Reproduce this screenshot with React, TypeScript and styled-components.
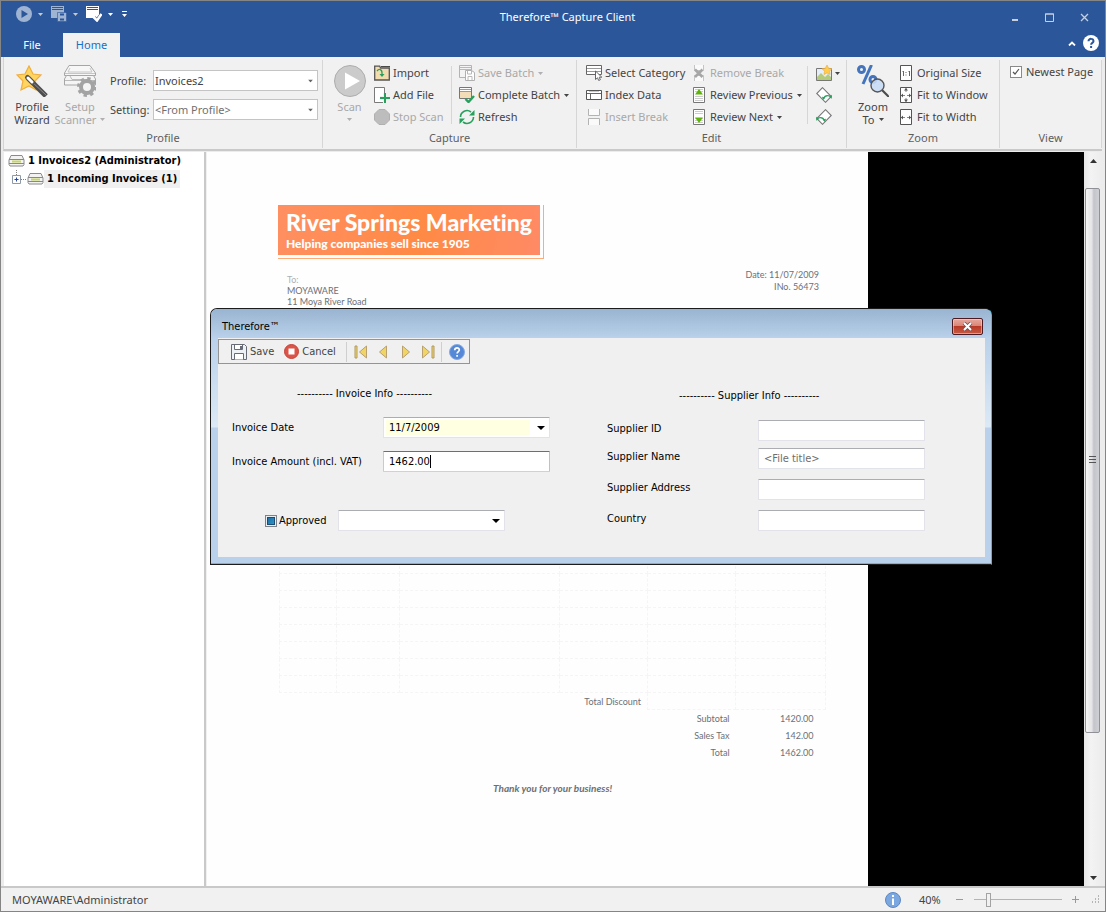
import React from "react";
import styled, { createGlobalStyle, css } from "styled-components";

const UI = `"Noto Sans", "Open Sans", sans-serif`;
const DIALOG = `"DejaVu Sans Condensed", "Liberation Sans", sans-serif`;
const PAPER = `Lato, "Open Sans", sans-serif`;

const Global = createGlobalStyle`
  *, *::before, *::after { box-sizing: border-box; }
  body { margin: 0; background: #fff; font: 11px/14px ${UI}; color: #444; }
  button, input, select { font: inherit; color: inherit; margin: 0; }
  button { border: 0; padding: 0; background: none; cursor: default; }
  svg { display: block; flex: none; }
`;

const Frame = styled.div`
  min-height: 100vh;
  padding: 0 1px 1px 0;
  display: grid;
`;

const AppWindow = styled.div`
  display: grid;
  grid-template-rows: auto auto 1fr auto;
  border: 1px solid #858585;
  background: #ececec;
  min-width: 0;
`;

/* ---------- title bar ---------- */

const TitleArea = styled.header`
  background: #2b579a;
  color: #fff;
`;

const TitleRow = styled.div`
  display: flex;
  align-items: center;
  height: 32px;
`;

const QuickAccess = styled.div`
  display: flex;
  align-items: flex-start;
  padding: 0 0 6px 15px;
  gap: 8px;
  width: 137px;
`;

const QuickButton = styled.button`
  display: flex;
  align-items: center;
  gap: 6px;
`;

const Title = styled.h1`
  flex: 1;
  margin: 0;
  font-size: 11px;
  line-height: 16px;
  font-weight: 400;
  text-align: center;
`;

const WindowButtons = styled.div`
  display: flex;
  align-items: center;
  padding-right: 3px;
`;

const WindowButton = styled.button`
  width: 35px;
  height: 32px;
  display: grid;
  place-items: center;
`;

const TabRow = styled.nav`
  display: flex;
  height: 24px;
  align-items: stretch;
`;

const Tab = styled.button<{ $active?: boolean }>`
  width: ${(p) => (p.$active ? 57 : 62)}px;
  background: ${(p) => (p.$active ? "#f1f1f1" : "transparent")};
  color: ${(p) => (p.$active ? "#1a6fc9" : "#fff")};
`;

const TabTools = styled.div`
  margin-left: auto;
  display: flex;
  align-items: center;
  gap: 7px;
  padding: 0 6px 4px 0;
`;

/* ---------- ribbon ---------- */

const Ribbon = styled.section`
  display: grid;
  grid-template-columns: 319px 254px 270px 153px 1fr;
  margin: 0 3px 1px 2px;
  border-left: 1px solid #d4d4d4;
  border-bottom: 2px solid #c9c9c9;
  background: #f1f1f1;
`;

const Group = styled.section`
  margin: 3px 0 1px;
  padding-top: 2px;
  border-right: 1px solid #d6d6d6;
  display: grid;
  grid-template-rows: 66px 20px;
`;

const GroupBody = styled.div<{ $cols: string; $pad?: string }>`
  display: grid;
  grid-template-columns: ${(p) => p.$cols};
  padding: ${(p) => p.$pad ?? "0"};
`;

const GroupLabel = styled.h2`
  margin: 0;
  font-size: 11px;
  line-height: 20px;
  font-weight: 400;
  text-align: center;
  color: #5e5e5e;
`;

const BigButton = styled.button<{ $off?: boolean }>`
  display: flex;
  flex-direction: column;
  align-items: center;
  padding-top: 3px;
  gap: 3px;
  line-height: 13px;
  white-space: nowrap;
  color: ${(p) => (p.$off ? "#a8a8a8" : "#444")};
`;

const BigText = styled.span`
  display: flex;
  flex-direction: column;
  align-items: center;
`;

const WithArrow = styled.span`
  display: flex;
  align-items: center;
  gap: 4px;
  min-height: 13px;
`;

const Column = styled.div<{ $indent?: number }>`
  display: grid;
  grid-template-rows: repeat(3, 22px);
  justify-items: start;
  padding-left: ${(p) => p.$indent ?? 0}px;
`;

const SmallButton = styled.button<{ $off?: boolean }>`
  display: flex;
  align-items: center;
  gap: 3px;
  white-space: nowrap;
  color: ${(p) => (p.$off ? "#a8a8a8" : "#444")};
`;

const ArrowGap = styled.span`
  display: flex;
  padding-left: 1px;
`;

const Divider = styled.span`
  width: 1px;
  height: 58px;
  margin-top: 4px;
  background: #d6d6d6;
`;

const ProfileForm = styled.div`
  display: grid;
  grid-template-columns: 43px 1fr;
  grid-auto-rows: 21px;
  row-gap: 8px;
  align-items: center;
  padding: 8px 0 0 5px;
`;

const SelectBox = styled.span`
  position: relative;
  display: grid;
  height: 21px;
`;

const RibbonSelect = styled.select<{ $muted?: boolean }>`
  appearance: none;
  width: 100%;
  border: 1px solid #c4c4c4;
  border-radius: 0;
  background: #fff;
  padding: 0 16px 0 1px;
  color: ${(p) => (p.$muted ? "#707070" : "#444")};
`;

const SelectArrow = styled.span<{ $right: number }>`
  position: absolute;
  right: ${(p) => p.$right}px;
  top: 50%;
  transform: translateY(-50%);
  pointer-events: none;
`;

const Check = styled.label`
  display: flex;
  align-items: center;
  gap: 4px;
  height: 20px;
  white-space: nowrap;
`;

const Tick = styled.input`
  appearance: none;
  width: 12px;
  height: 12px;
  border: 1px solid #8a8a8a;
  background: #fff
    url("data:image/svg+xml,%3Csvg xmlns='http://www.w3.org/2000/svg' viewBox='0 0 10 10'%3E%3Cpath d='M2 5l2 2 4-5' fill='none' stroke='%23555' stroke-width='1.2'/%3E%3C/svg%3E")
    center / 10px 10px no-repeat;
`;

/* ---------- work area ---------- */

const Work = styled.main`
  position: relative;
  display: grid;
  grid-template-columns: 200px 3px 1fr 17px;
  margin: 0 4px 0 3px;
  min-height: 0;
`;

const Tree = styled.ul`
  list-style: none;
  margin: 0;
  padding: 0 0 0 4px;
  background: #fff;
  font: bold 11px/18px ${DIALOG};
  color: #000;
`;

const Node = styled.li`
  display: flex;
  align-items: center;
  height: 18px;
  white-space: nowrap;
`;

const ExpanderSlot = styled.span`
  padding-left: 4px;
`;

const NodeText = styled.span<{ $selected?: boolean }>`
  padding: 0 3px;
  background: ${(p) => (p.$selected ? "#f0f0f0" : "transparent")};
`;

const Splitter = styled.div`
  background: #c9c9c9;
  border-right: 1px solid #f0f0f0;
`;

const Viewer = styled.div`
  background: #000;
  overflow: hidden;
`;

const Sheet = styled.article`
  width: 661px;
  min-height: 100%;
  background: #fefefe;
  color: #6c7076;
  font: 9px/11px ${PAPER};
  font-variant-ligatures: none;
  padding: 53px 42px 60px 71px;
`;

const Banner = styled.div`
  width: 266px;
  padding: 0 3px 3px 0;
  border: solid #ffab78;
  border-width: 0 1px 1px 0;
`;

const BannerFill = styled.div`
  height: 50px;
  padding: 3px 0 0 8px;
  background: linear-gradient(100deg, #ff8f62, #ff8a45 55%, #ff8a66);
  color: #fff;
`;

const Brand = styled.h3`
  margin: 0;
  font-size: 23px;
  line-height: 28px;
  font-weight: 900;
  white-space: nowrap;
`;

const Slogan = styled.p`
  margin: 0;
  font-size: 12px;
  line-height: 15px;
  font-weight: 900;
`;

const Addresses = styled.div`
  display: flex;
  justify-content: space-between;
  padding: 10px 7px 0 9px;
`;

const Address = styled.address<{ $right?: boolean }>`
  font-style: normal;
  text-align: ${(p) => (p.$right ? "right" : "left")};
  padding-top: ${(p) => (p.$right ? 0 : 5)}px;
  line-height: ${(p) => (p.$right ? 12 : 11)}px;
`;

const Faded = styled.span`
  color: #adb0b4;
`;

const Items = styled.table`
  width: 546px;
  margin: 249px 0 0 1px;
  border-collapse: collapse;
  table-layout: fixed;
`;

const Cell = styled.td`
  height: 17px;
  padding: 0;
  border: 1px dashed #f5f5f5;
`;

const Sum = styled.td<{ $pad: number }>`
  height: 17px;
  padding: 0 ${(p) => p.$pad}px 0 0;
  text-align: right;
`;

const Thanks = styled.p`
  margin: 21px 0 0 215px;
  font-size: 10px;
  line-height: 12px;
  font-weight: 700;
  font-style: italic;
`;

const ScrollBar = styled.div`
  display: flex;
  flex-direction: column;
  padding-left: 1px;
  background: linear-gradient(90deg, #e6e6e6, #f3f3f3 40%, #ededed);
`;

const ScrollButton = styled.button<{ $tall?: boolean }>`
  height: ${(p) => (p.$tall ? 36 : 17)}px;
  display: flex;
  justify-content: center;
  align-items: flex-start;
  padding-top: 7px;
`;

const ScrollTrack = styled.div`
  flex: 1;
`;

const ScrollThumb = styled.div`
  width: 15px;
  height: 80%;
  border: 1px solid #8f9196;
  border-radius: 2px;
  background: linear-gradient(90deg, #f6f6f6, #e4e4e6 45%, #c4c5cb 60%, #cfd0d5);
  display: grid;
  place-items: center;
`;

/* ---------- dialog ---------- */

const Dialog = styled.section`
  position: absolute;
  left: 206px;
  top: 156px;
  width: 782px;
  border: 1px solid #1c1c1c;
  border-right-color: #2fc4e0;
  border-radius: 7px 7px 0 0;
  background: linear-gradient(#b9d1ea 28px, #dce9f6 118px, #b9d1ea 119px);
  box-shadow: inset 0 -1px 0 #2fd3ee;
  padding: 0 6px 7px 7px;
  font: 11px/16px ${DIALOG};
  color: #000;
`;

const DialogTitle = styled.header`
  display: flex;
  align-items: center;
  justify-content: space-between;
  height: 29px;
  margin: 0 -6px 0 -7px;
  padding: 6px 8px 0 11px;
  border-radius: 6px 6px 0 0;
  background: linear-gradient(#99b4d1, #b9d1ea);
`;

const DialogName = styled.h2`
  margin: 0;
  font-size: 11px;
  line-height: 16px;
  font-weight: 400;
`;

const CloseButton = styled.button`
  width: 31px;
  height: 17px;
  border: 1px solid #4e1a22;
  border-radius: 2px;
  background: linear-gradient(#e8a89c, #d98476 48%, #b83a26 50%, #c75a45);
  box-shadow: inset 0 0 0 1px rgba(255, 220, 210, 0.5);
  display: grid;
  place-items: center;
`;

const DialogBody = styled.div`
  background: #f0f0f0;
  height: 219px;
`;

const Tools = styled.div`
  display: inline-flex;
  align-items: center;
  height: 25px;
  margin-top: 1px;
  padding: 0 4px 0 12px;
  border: 1px solid #949494;
  vertical-align: top;
`;

const ToolButton = styled.button<{ $gap?: number }>`
  display: flex;
  align-items: center;
  gap: 3px;
  margin-right: ${(p) => p.$gap ?? 6}px;
  color: #444;
`;

const ToolDivider = styled.span`
  width: 1px;
  height: 20px;
  margin-right: 7px;
  background: #cfcfcf;
`;

const Fields = styled.form`
  display: grid;
  grid-template-columns: 375px 1fr;
  padding: 22px 60px 0 14px;
`;

const Pane = styled.fieldset`
  border: 0;
  margin: 0;
  padding: 0;
  min-width: 0;
`;

const PaneTitle = styled.div<{ $indent: number; $top: number; $bottom: number }>`
  padding: ${(p) => p.$top}px 0 ${(p) => p.$bottom}px ${(p) => p.$indent}px;
  white-space: pre;
`;

const FieldRow = styled.div<{ $gap: number; $top?: boolean }>`
  display: grid;
  grid-template-columns: 151px 167px;
  align-items: ${(p) => (p.$top ? "start" : "center")};
  margin-bottom: ${(p) => p.$gap}px;
  > label {
    padding-top: ${(p) => (p.$top ? 1 : 0)}px;
  }
`;

const fieldLook = css`
  width: 100%;
  height: 21px;
  border: 1px solid #e2e3ea;
  border-top-color: #abadb3;
  border-radius: 1px;
  background: #fff;
  padding: 0 5px;
  outline: none;
`;

const TextBox = styled.input<{ $focused?: boolean }>`
  ${fieldLook}
  ${(p) =>
    p.$focused &&
    css`
      border-color: #3d7bad #a4c9e3 #b7d9ed #b5cfe7;
    `}
  &::placeholder {
    color: #6d6d6d;
    opacity: 1;
  }
`;

const DropDown = styled.select<{ $required?: boolean }>`
  appearance: none;
  ${fieldLook}
  box-shadow: inset 0 0 0 2px #fff, inset -19px 0 0 0 #fff;
  background: ${(p) => (p.$required ? "#ffffe1" : "#fff")};
`;

const CaretBox = styled.span`
  position: relative;
  display: grid;
  &::after {
    content: "";
    position: absolute;
    left: 47px;
    top: 4px;
    width: 1px;
    height: 13px;
    background: #000;
  }
`;

const ApprovalRow = styled.div`
  display: grid;
  grid-template-columns: 73px 167px;
  align-items: center;
  margin: 38px 0 0 33px;
`;

const Approval = styled.label`
  display: flex;
  align-items: center;
  gap: 2px;
`;

const MixedBox = styled.input`
  appearance: none;
  width: 12px;
  height: 12px;
  border: 1px solid #7f8388;
  background: linear-gradient(135deg, #1c5f93, #2fa3d6);
  box-shadow: inset 0 0 0 1px #e8eef2, inset 0 0 0 2px #1b4c77;
`;

/* ---------- status bar ---------- */

const Status = styled.footer`
  display: flex;
  align-items: center;
  height: 25px;
  padding: 0 5px 0 11px;
  border-top: 2px solid #c9c9c9;
  background: #f1f1f1;
`;

const StatusTools = styled.div`
  margin-left: auto;
  display: flex;
  align-items: center;
`;

const ZoomValue = styled.output`
  width: 36px;
  margin-left: 18px;
`;

const Slider = styled.input`
  appearance: none;
  width: 88px;
  height: 14px;
  background: linear-gradient(#b4b4b4, #b4b4b4) center / 100% 1px no-repeat;
  &::-webkit-slider-thumb {
    appearance: none;
    width: 5px;
    height: 14px;
    border: 1px solid #a3a3a3;
    background: #f1f1f1;
  }
`;

const SliderBox = styled.span`
  display: flex;
  padding: 0 9px 0 10px;
`;

const Grip = styled.span`
  align-self: flex-end;
  padding: 0 0 4px 11px;
`;

/* ---------- drawings ---------- */

const Arrow = ({ fill = "#444", w = 5 }: { fill?: string; w?: number }) => (
  <svg width={w} height={w === 5 ? 3 : 4} viewBox={w === 5 ? "0 0 5 3" : "0 0 8 4"}>
    <path d={w === 5 ? "M0 0h5L2.5 3z" : "M0 0h8L4 4z"} fill={fill} />
  </svg>
);

const Svg = ({ s = 16, children }: { s?: number; children: React.ReactNode }) => (
  <svg width={s} height={s} viewBox={`0 0 ${s} ${s}`} fill="none">
    {children}
  </svg>
);

const QuickScan = () => (
  <Svg>
    <circle cx="8" cy="8" r="8" fill="#9fb3d3" />
    <path d="M5.500 4v8l6.500-4z" fill="#2b579a" />
  </Svg>
);

const QuickSave = () => (
  <Svg>
    <path d="M0 0h13v7H7v5H0z" fill="#9fb3d3" />
    <path d="M1 1.500h11M1 3.500h11" stroke="#2b579a" />
    <path d="M6.500 6.500h8l1 1v8h-9z" fill="#9fb3d3" stroke="#2b579a" strokeWidth=".600" />
    <path d="M9 8.500h4M9 13.500h4" stroke="#2b579a" strokeWidth="2" />
  </Svg>
);

const QuickComplete = () => (
  <svg width="16" height="16" viewBox="0 0 16 16" fill="none">
    <path d="M0 0h13v12H0z" fill="#fff" />
    <path d="M1 1.500h11M1 3.500h11" stroke="#2b579a" />
    <path d="M7 11l4 3.500L16 8" stroke="#2b579a" strokeWidth="4" />
    <path d="M0 5h9v7H0z" fill="#fff" />
    <path d="M7.500 11l3.500 3.500L15.500 8" stroke="#fff" strokeWidth="2.500" />
  </svg>
);

const Wizard = () => (
  <Svg s={32}>
    <path d="M13 1l4 8 8 1-6 6 1 9-7-4-8 4 2-9-6-6 8-1z" fill="#ffd45f" stroke="#efae3f" strokeWidth="1.200" />
    <path d="M12 13l18 18" stroke="#4d4d4d" strokeWidth="5" />
    <path d="M14 15l16 15" stroke="#8f8f8f" strokeWidth="1" />
    <path d="M11.500 12.500l5 5" stroke="#555" strokeWidth="5" strokeLinecap="round" />
    <path d="M12 13l4 4" stroke="#fff" strokeWidth="3" strokeLinecap="round" />
  </Svg>
);

const ScannerSetup = () => (
  <Svg s={32}>
    <path d="M5 .500h21L31.500 8v2.500H.500V8z" fill="#f7f7f7" stroke="#a6a6a6" />
    <path d="M1 8.500h30M6 3L4 7h24l-2-4" stroke="#c6c6c6" />
    <path d="M5 10h22v4H5z" fill="#d5d5d5" />
    <path d="M.500 14l2-3.500h27l2 3.500v6H.500z" fill="#f5f5f5" stroke="#a6a6a6" />
    <path d="M1 15.500h30M6 11l2 3.500h16" stroke="#bbb" />
    <circle cx="23" cy="22" r="6" fill="#f4f4f4" stroke="#a3a3a3" strokeWidth="4" />
    <circle cx="23" cy="22" r="8.500" stroke="#a3a3a3" strokeWidth="3" strokeDasharray="3.300 3.376" />
  </Svg>
);

const ScanBig = () => (
  <Svg s={32}>
    <circle cx="16" cy="16" r="15.500" fill="#cbcbcb" stroke="#adadad" />
    <path d="M11 7.500v17L26 16z" fill="#fff" />
  </Svg>
);

const ImportIcon = () => (
  <Svg>
    <path d="M.700 15V1.200h5l1 2h8.600V15z" fill="#f2dcae" stroke="#555" strokeWidth="1.300" />
    <path d="M7 1h9v1.500H7z" fill="#4a4a4a" />
    <path d="M3 6c2-2.500 5-2 5 2v2" stroke="#27a05d" strokeWidth="1.300" />
    <path d="M5.500 9h5L8 12z" fill="#27a05d" />
  </Svg>
);

const AddFileIcon = () => (
  <Svg>
    <path d="M.500.500h10v15h-10z" fill="#fff" stroke="#7a7a7a" />
    <path d="M11 6v10M6 11h10" stroke="#f1f1f1" strokeWidth="4" />
    <path d="M11 6v10M6 11h10" stroke="#27a05d" strokeWidth="2" />
  </Svg>
);

const StopIcon = () => (
  <Svg>
    <path d="M5 .500h6L15.500 5v6L11 15.500H5L.500 11V5z" fill="#bdbdbd" stroke="#b0b0b0" />
  </Svg>
);

const SaveBatchIcon = () => (
  <Svg>
    <path d="M.500.500h12v12H.500z" fill="#f4f4f4" stroke="#b3b3b3" />
    <path d="M1 2.500h11M1 4.500h11" stroke="#b9b9b9" />
    <path d="M6.500 5.500h6l3 2v8h-9z" fill="#fff" stroke="#b0b0b0" />
    <path d="M8.500 6v3h4V6M9 15v-3.500h4V15" stroke="#b8b8b8" />
  </Svg>
);

const CompleteIcon = () => (
  <Svg>
    <path d="M.500.500h12v11H.500z" fill="#f3dcb8" stroke="#777" />
    <path d="M1 1h11v3.500H1z" fill="#fff" />
    <path d="M1 2.500h11M1 4.500h11" stroke="#999" />
    <path d="M6.500 12l3 3L15 9" stroke="#27a05d" strokeWidth="2.400" />
  </Svg>
);

const RefreshIcon = () => (
  <Svg>
    <path d="M1.500 8A6.500 6.500 0 0 1 12 3M14.500 8A6.500 6.500 0 0 1 4 13" stroke="#27a05d" strokeWidth="1.600" />
    <path d="M15.500 1v5.500H10zM.500 15V9.500H6z" fill="#27a05d" />
  </Svg>
);

const CategoryIcon = () => (
  <Svg>
    <path d="M.500.500h15v9H.500z" fill="#fff" stroke="#666" />
    <path d="M1 3.500h14M1 6.500h14" stroke="#999" />
    <path d="M9.500 6v8.500l2-1.700 1.200 2.700 1.700-.800-1.200-2.500h2.600z" fill="#fff" stroke="#666" />
  </Svg>
);

const IndexIcon = () => (
  <Svg>
    <path d="M.500 3.500h15v9H.500z" fill="#fff" stroke="#555" />
    <path d="M1 6.500h14M4.500 7v5" stroke="#666" />
    <path d="M3 4.500h10" stroke="#c9c9c9" />
  </Svg>
);

const InsertBreakIcon = () => (
  <Svg>
    <path d="M2.500 0v6.500h11V0M2.500 16V9.500h11V16" fill="#fafafa" stroke="#b3b3b3" />
  </Svg>
);

const RemoveBreakIcon = () => (
  <Svg>
    <path d="M3.500 0v5.500h9V0M3.500 16v-5.500h9V16" fill="#fafafa" stroke="#c4c4c4" />
    <path d="M4 4.500l7.500 7.500M11.500 4.500L4 12" stroke="#a6a6a6" strokeWidth="2.600" />
  </Svg>
);

const ReviewIcon = ({ down }: { down?: boolean }) => (
  <Svg>
    <path d="M2.500.500h11v15h-11z" fill="#fff" stroke="#777" />
    <path d="M4 2.500h8M4 4.500h8M4 9.500h8M4 11.500h8M4 13.500h8" stroke="#ccc" />
    <path d={down ? "M4 8.500h8L8 14z" : "M4 7.500h8L8 2z"} fill="#5fb40a" />
  </Svg>
);

const AddImageIcon = () => (
  <Svg>
    <path d="M.500 3.500h15v12H.500z" fill="#e4eefb" stroke="#777" />
    <path d="M1 15v-3l4-4 4 4 3-3 3 3v3z" fill="#b5cb7c" />
    <path d="M11 0l1.600 3.200 3.400.500-2.500 2.500.600 3.300-3.100-1.600L8 9.500l.500-3.300L6 3.700l3.400-.500z" fill="#ffcc4d" stroke="#eba838" strokeWidth=".600" />
  </Svg>
);

const RotateIcon = ({ left }: { left?: boolean }) => (
  <Svg>
    <g transform={left ? "matrix(-1 0 0 1 16 0)" : undefined}>
      <path d="M6.500.700L.700 6.500l8.800 8.800 5.800-5.800z" fill="#fff" stroke="#777" strokeWidth="1.100" />
      <path d="M7.500 11.500C8.500 9 11 8 14 9" stroke="#27a05d" strokeWidth="1.300" />
      <path d="M15.800 7.800v4l-3-2zM6 9.800l3.500.700L7 13z" fill="#27a05d" />
    </g>
  </Svg>
);

const ZoomBig = () => (
  <Svg s={32}>
    <circle cx="4.500" cy="4.500" r="3" stroke="#4474bd" strokeWidth="3" />
    <circle cx="16" cy="14.500" r="3" stroke="#4474bd" strokeWidth="3" />
    <path d="M14.500 0L6 19" stroke="#4474bd" strokeWidth="3" />
    <path d="M25 25l7 7" stroke="#4c4c4c" strokeWidth="2.200" />
    <circle cx="20.500" cy="20.500" r="6.500" fill="#c6dcf6" fillOpacity=".900" stroke="#555" strokeWidth="1.400" />
  </Svg>
);

const PageIcon = ({ kind }: { kind: "one" | "window" | "width" }) => (
  <Svg>
    <path d="M2.500.500h11v15h-11z" fill="#fff" stroke="#555" />
    {kind === "one" ? (
      <path d="M4.500 7l1-1v5M10.500 7l1-1v5M8 7v1M8 9.500v1" stroke="#666" />
    ) : (
      <>
        <path d="M3 8.500h4M9 8.500h4" stroke="#888" />
        <path d="M3 8.500L5 6.500v4zM13 8.500l-2-2v4z" fill="#555" />
      </>
    )}
    {kind === "window" && (
      <>
        <path d="M8 1v4M8 11v4" stroke="#888" />
        <path d="M8 1L6 3.500h4zM8 15l-2-2.500h4z" fill="#555" />
      </>
    )}
  </Svg>
);

const TreeScanner = () => (
  <svg width="17" height="14" viewBox="0 0 17 14" fill="none">
    <path d="M3 1.500h11l2 4.500v4.500l-1 1.500h-13l-1-1.500V6z" fill="#f3f3f3" stroke="#8a8a8a" />
    <path d="M1 5.500h15M1 9.500h15" stroke="#888" />
    <path d="M4 6.500h9v2H4z" fill="#c8d65e" />
  </svg>
);

const Expander = () => (
  <svg width="15" height="18" viewBox="0 0 15 18" fill="none">
    <path d="M4.500 0v5M9 9.500h6" stroke="#808080" strokeDasharray="1 1" />
    <path d="M.500 5.500h8v8h-8z" fill="#fff" stroke="#8f9aa8" />
    <path d="M2.500 9.500h4M4.500 7.500v4" stroke="#27469a" />
  </svg>
);

const Floppy = () => (
  <Svg>
    <path d="M.500.500h13l2 2v13H.500z" fill="#eef1f6" stroke="#666b75" />
    <path d="M3.500 1v4.500h8V1M3.500 15.500v-6h9v6" fill="#fff" stroke="#666b75" />
    <path d="M9 2h2v3H9z" fill="#666b75" />
  </Svg>
);

const CancelIcon = () => (
  <Svg s={15}>
    <circle cx="7.500" cy="7.500" r="7" fill="#dc5348" stroke="#c5433a" />
    <path d="M4.500 4.500h6v6h-6z" fill="#fff" />
  </Svg>
);

const Nav = ({ bar, back }: { bar?: boolean; back?: boolean }) => (
  <svg width={bar ? 14 : 10} height="14" viewBox={bar ? "0 0 14 14" : "4 0 10 14"} fill="none">
    <g transform={back ? undefined : bar ? "matrix(-1 0 0 1 14 0)" : "matrix(-1 0 0 1 18 0)"}>
      {bar && <path d="M1 1h2v12H1z" fill="#efd56e" stroke="#b09a5c" />}
      <path d="M12.500 1v12L5.500 7z" fill="#f0d464" stroke="#b9a070" />
    </g>
  </svg>
);

const HelpBlue = () => (
  <Svg>
    <circle cx="8" cy="8" r="7.500" fill="#5688d8" stroke="#86a9df" />
    <path d="M5.700 6.200C5.700 3 10.400 3.200 10.300 6c0 1.500-2.200 1.700-2.200 3.500M8.100 11v1.700" stroke="#fff" strokeWidth="1.700" />
  </Svg>
);

const HelpWhite = () => (
  <Svg>
    <circle cx="8" cy="8" r="8" fill="#fff" />
    <path d="M5.500 6.200c0-3.200 5-3 5 0 0 1.700-2.400 1.600-2.400 3.600M8.100 11v2" stroke="#2b579a" strokeWidth="2" />
  </Svg>
);

const InfoIcon = () => (
  <Svg>
    <circle cx="8" cy="8" r="7.500" fill="#7ba7e0" stroke="#5c86c4" />
    <path d="M8 3v2M8 6.500V13" stroke="#fff" strokeWidth="2" />
  </Svg>
);

/* ---------- parts ---------- */

type ToolProps = { icon: React.ReactNode; label: string; off?: boolean; menu?: boolean };

const RibbonTool = ({ icon, label, off, menu }: ToolProps) => (
  <SmallButton type="button" disabled={off} $off={off}>
    {icon}
    {label}
    {menu && (
      <ArrowGap>
        <Arrow fill={off ? "#b0b0b0" : "#444"} />
      </ArrowGap>
    )}
  </SmallButton>
);

const suppliers = [
  { id: "supplier-id", label: "Supplier ID", gap: 7 },
  { id: "supplier-name", label: "Supplier Name", hint: "<File title>", gap: 10 },
  { id: "supplier-address", label: "Supplier Address", gap: 10 },
  { id: "country", label: "Country", gap: 0 },
];

const columnWidths = [57, 63, 160, 88, 88, 90];

const sums = [
  ["Subtotal", "1420.00"],
  ["Sales Tax", "142.00"],
  ["Total", "1462.00"],
];

const Invoice = () => (
  <Sheet>
    <Banner>
      <BannerFill>
        <Brand>River Springs Marketing</Brand>
        <Slogan>Helping companies sell since 1905</Slogan>
      </BannerFill>
    </Banner>
    <Addresses>
      <Address>
        <Faded>To:</Faded>
        <br />
        MOYAWARE
        <br />
        11 Moya River Road
      </Address>
      <Address $right>
        Date: 11/07/2009
        <br />
        INo. 56473
      </Address>
    </Addresses>
    <Items>
      <colgroup>
        {columnWidths.map((w, i) => (
          <col key={i} width={w} />
        ))}
      </colgroup>
      <tbody>
        {Array.from({ length: 8 }, (_, r) => (
          <tr key={r}>
            {columnWidths.map((_, c) => (
              <Cell key={c} />
            ))}
          </tr>
        ))}
        <tr>
          <Sum colSpan={4} $pad={6}>Total Discount</Sum>
          <Cell />
          <Cell />
        </tr>
        {sums.map(([name, value]) => (
          <tr key={name}>
            <Sum colSpan={5} $pad={6}>{name}</Sum>
            <Sum $pad={12}>{value}</Sum>
          </tr>
        ))}
      </tbody>
    </Items>
    <Thanks>Thank you for your business!</Thanks>
  </Sheet>
);

const IndexDialog = () => (
  <Dialog role="dialog" aria-label="Therefore">
    <DialogTitle>
      <DialogName>Therefore™</DialogName>
      <CloseButton type="button" aria-label="Close">
        <svg width="11" height="9" viewBox="0 0 11 9" fill="none">
          <path d="M2 1l7 7M9 1L2 8" stroke="#555a6b" strokeWidth="3.600" />
          <path d="M2 1l7 7M9 1L2 8" stroke="#fff" strokeWidth="2" />
        </svg>
      </CloseButton>
    </DialogTitle>
    <DialogBody>
      <Tools>
        <ToolButton type="button" $gap={10}><Floppy />Save</ToolButton>
        <ToolButton type="button" $gap={10}><CancelIcon />Cancel</ToolButton>
        <ToolDivider />
        <ToolButton type="button" aria-label="First" $gap={10}><Nav bar back /></ToolButton>
        <ToolButton type="button" aria-label="Previous" $gap={13}><Nav back /></ToolButton>
        <ToolButton type="button" aria-label="Next" $gap={10}><Nav /></ToolButton>
        <ToolButton type="button" aria-label="Last"><Nav bar /></ToolButton>
        <ToolDivider />
        <ToolButton type="button" aria-label="Help" $gap={0}><HelpBlue /></ToolButton>
      </Tools>
      <Fields>
        <Pane>
          <PaneTitle $indent={65} $top={0} $bottom={15}>---------- Invoice Info ----------</PaneTitle>
          <FieldRow $gap={13}>
            <label htmlFor="invoice-date">Invoice Date</label>
            <SelectBox>
              <DropDown id="invoice-date" $required>
                <option>11/7/2009</option>
              </DropDown>
              <SelectArrow $right={5}><Arrow w={8} fill="#000" /></SelectArrow>
            </SelectBox>
          </FieldRow>
          <FieldRow $gap={0}>
            <label htmlFor="invoice-amount">Invoice Amount (incl. VAT)</label>
            <CaretBox>
              <TextBox id="invoice-amount" defaultValue="1462.00" $focused />
            </CaretBox>
          </FieldRow>
          <ApprovalRow>
            <Approval>
              <MixedBox type="checkbox" />
              Approved
            </Approval>
            <SelectBox>
              <DropDown aria-label="Approved by">
                <option />
              </DropDown>
              <SelectArrow $right={5}><Arrow w={8} fill="#000" /></SelectArrow>
            </SelectBox>
          </ApprovalRow>
        </Pane>
        <Pane>
          <PaneTitle $indent={72} $top={2} $bottom={16}>---------- Supplier Info ----------</PaneTitle>
          {suppliers.map((s) => (
            <FieldRow key={s.id} $gap={s.gap} $top>
              <label htmlFor={s.id}>{s.label}</label>
              <TextBox id={s.id} placeholder={s.hint} />
            </FieldRow>
          ))}
        </Pane>
      </Fields>
    </DialogBody>
  </Dialog>
);

const App = () => (
  <>
    <Global />
    <Frame>
      <AppWindow>
        <TitleArea>
          <TitleRow>
            <QuickAccess>
              <QuickButton type="button" aria-label="Scan"><QuickScan /><Arrow fill="#c9c9c9" /></QuickButton>
              <QuickButton type="button" aria-label="Save batch"><QuickSave /><Arrow fill="#c9c9c9" /></QuickButton>
              <QuickButton type="button" aria-label="Complete batch"><QuickComplete /><Arrow fill="#fff" /></QuickButton>
              <QuickButton type="button" aria-label="Customize">
                <svg width="7" height="16" viewBox="0 0 7 16"><path d="M1 5h5v1H1zM1 8h5L3.500 11z" fill="#fff" /></svg>
              </QuickButton>
            </QuickAccess>
            <Title>Therefore™ Capture Client</Title>
            <WindowButtons>
              <WindowButton type="button" aria-label="Minimize">
                <svg width="8" height="9" viewBox="0 0 8 9"><path d="M1 6h6v2H1z" fill="#c8d0de" /></svg>
              </WindowButton>
              <WindowButton type="button" aria-label="Maximize">
                <svg width="9" height="9" viewBox="0 0 9 9"><path d="M.500 1h8v7.500h-8zM0 1h9" fill="none" stroke="#c8d0de" /></svg>
              </WindowButton>
              <WindowButton type="button" aria-label="Close">
                <svg width="9" height="9" viewBox="0 0 9 9"><path d="M1 1l7 7M8 1L1 8" stroke="#c8d0de" strokeWidth="1.300" /></svg>
              </WindowButton>
            </WindowButtons>
          </TitleRow>
          <TabRow>
            <Tab type="button">File</Tab>
            <Tab type="button" $active>Home</Tab>
            <TabTools>
              <QuickButton type="button" aria-label="Collapse ribbon">
                <svg width="8" height="5" viewBox="0 0 8 5"><path d="M1 4.500l3-3 3 3" fill="none" stroke="#fff" strokeWidth="1.800" /></svg>
              </QuickButton>
              <QuickButton type="button" aria-label="Help"><HelpWhite /></QuickButton>
            </TabTools>
          </TabRow>
        </TitleArea>

        <Ribbon>
          <Group>
            <GroupBody $cols="46px 50px 1fr" $pad="0 4px 0 5px">
              <BigButton type="button">
                <Wizard />
                <BigText><span>Profile</span><span>Wizard</span></BigText>
              </BigButton>
              <BigButton type="button" disabled $off>
                <ScannerSetup />
                <BigText><span>Setup</span><WithArrow>Scanner<Arrow fill="#b0b0b0" /></WithArrow></BigText>
              </BigButton>
              <ProfileForm>
                <label htmlFor="profile">Profile:</label>
                <SelectBox>
                  <RibbonSelect id="profile"><option>Invoices2</option></RibbonSelect>
                  <SelectArrow $right={5}><Arrow fill="#666" /></SelectArrow>
                </SelectBox>
                <label htmlFor="setting">Setting:</label>
                <SelectBox>
                  <RibbonSelect id="setting" $muted><option>{"<From Profile>"}</option></RibbonSelect>
                  <SelectArrow $right={5}><Arrow fill="#666" /></SelectArrow>
                </SelectBox>
              </ProfileForm>
            </GroupBody>
            <GroupLabel>Profile</GroupLabel>
          </Group>

          <Group>
            <GroupBody $cols="45px 79px 1px 1fr" $pad="0 0 0 4px">
              <BigButton type="button" disabled $off>
                <ScanBig />
                <BigText><span>Scan</span><WithArrow><Arrow fill="#b0b0b0" /></WithArrow></BigText>
              </BigButton>
              <Column $indent={2}>
                <RibbonTool icon={<ImportIcon />} label="Import" />
                <RibbonTool icon={<AddFileIcon />} label="Add File" />
                <RibbonTool icon={<StopIcon />} label="Stop Scan" off />
              </Column>
              <Divider />
              <Column $indent={7}>
                <RibbonTool icon={<SaveBatchIcon />} label="Save Batch" off menu />
                <RibbonTool icon={<CompleteIcon />} label="Complete Batch" menu />
                <RibbonTool icon={<RefreshIcon />} label="Refresh" />
              </Column>
            </GroupBody>
            <GroupLabel>Capture</GroupLabel>
          </Group>

          <Group>
            <GroupBody $cols="105px 116px 1px 1fr" $pad="0 0 0 9px">
              <Column>
                <RibbonTool icon={<CategoryIcon />} label="Select Category" />
                <RibbonTool icon={<IndexIcon />} label="Index Data" />
                <RibbonTool icon={<InsertBreakIcon />} label="Insert Break" off />
              </Column>
              <Column>
                <RibbonTool icon={<RemoveBreakIcon />} label="Remove Break" off />
                <RibbonTool icon={<ReviewIcon />} label="Review Previous" menu />
                <RibbonTool icon={<ReviewIcon down />} label="Review Next" menu />
              </Column>
              <Divider />
              <Column $indent={8}>
                <SmallButton type="button" aria-label="Add image"><AddImageIcon /><Arrow /></SmallButton>
                <SmallButton type="button" aria-label="Rotate right"><RotateIcon /></SmallButton>
                <SmallButton type="button" aria-label="Rotate left"><RotateIcon left /></SmallButton>
              </Column>
            </GroupBody>
            <GroupLabel>Edit</GroupLabel>
          </Group>

          <Group>
            <GroupBody $cols="46px 1fr" $pad="0 0 0 3px">
              <BigButton type="button">
                <ZoomBig />
                <BigText><span>Zoom</span><WithArrow>To<Arrow /></WithArrow></BigText>
              </BigButton>
              <Column $indent={2}>
                <RibbonTool icon={<PageIcon kind="one" />} label="Original Size" />
                <RibbonTool icon={<PageIcon kind="window" />} label="Fit to Window" />
                <RibbonTool icon={<PageIcon kind="width" />} label="Fit to Width" />
              </Column>
            </GroupBody>
            <GroupLabel>Zoom</GroupLabel>
          </Group>

          <Group>
            <GroupBody $cols="1fr" $pad="0 0 0 10px">
              <Check><Tick type="checkbox" defaultChecked />Newest Page</Check>
            </GroupBody>
            <GroupLabel>View</GroupLabel>
          </Group>
        </Ribbon>

        <Work>
          <Tree>
            <Node><TreeScanner /><NodeText>1 Invoices2 (Administrator)</NodeText></Node>
            <Node>
              <ExpanderSlot><Expander /></ExpanderSlot>
              <TreeScanner />
              <NodeText $selected>1 Incoming Invoices (1)</NodeText>
            </Node>
          </Tree>
          <Splitter />
          <Viewer><Invoice /></Viewer>
          <ScrollBar>
            <ScrollButton type="button" aria-label="Scroll up" $tall>
              <svg width="7" height="4" viewBox="0 0 7 4"><path d="M0 4h7L3.500 0z" fill="#333" /></svg>
            </ScrollButton>
            <ScrollTrack>
              <ScrollThumb>
                <svg width="7" height="8" viewBox="0 0 7 8"><path d="M0 .500h7M0 3.500h7M0 6.500h7" stroke="#555" /></svg>
              </ScrollThumb>
            </ScrollTrack>
            <ScrollButton type="button" aria-label="Scroll down">
              <svg width="7" height="4" viewBox="0 0 7 4"><path d="M0 0h7L3.500 4z" fill="#333" /></svg>
            </ScrollButton>
          </ScrollBar>
          <IndexDialog />
        </Work>

        <Status>
          <span>MOYAWARE\Administrator</span>
          <StatusTools>
            <InfoIcon />
            <ZoomValue>40%</ZoomValue>
            <button type="button" aria-label="Zoom out">
              <svg width="9" height="9" viewBox="0 0 9 9"><path d="M1 4.500h7" stroke="#999" /></svg>
            </button>
            <SliderBox>
              <Slider type="range" aria-label="Zoom" min={0} max={100} defaultValue={14} />
            </SliderBox>
            <button type="button" aria-label="Zoom in">
              <svg width="9" height="9" viewBox="0 0 9 9"><path d="M1 4.500h7M4.500 1v7" stroke="#999" /></svg>
            </button>
            <Grip>
              <svg width="9" height="9" viewBox="0 0 9 9"><path d="M7 0h1v2H7zM4 3h1v2H4zM7 3h1v2H7zM1 6h1v2H1zM4 6h1v2H4zM7 6h1v2H7z" fill="#b5b5b5" /></svg>
            </Grip>
          </StatusTools>
        </Status>
      </AppWindow>
    </Frame>
  </>
);

export default App;
